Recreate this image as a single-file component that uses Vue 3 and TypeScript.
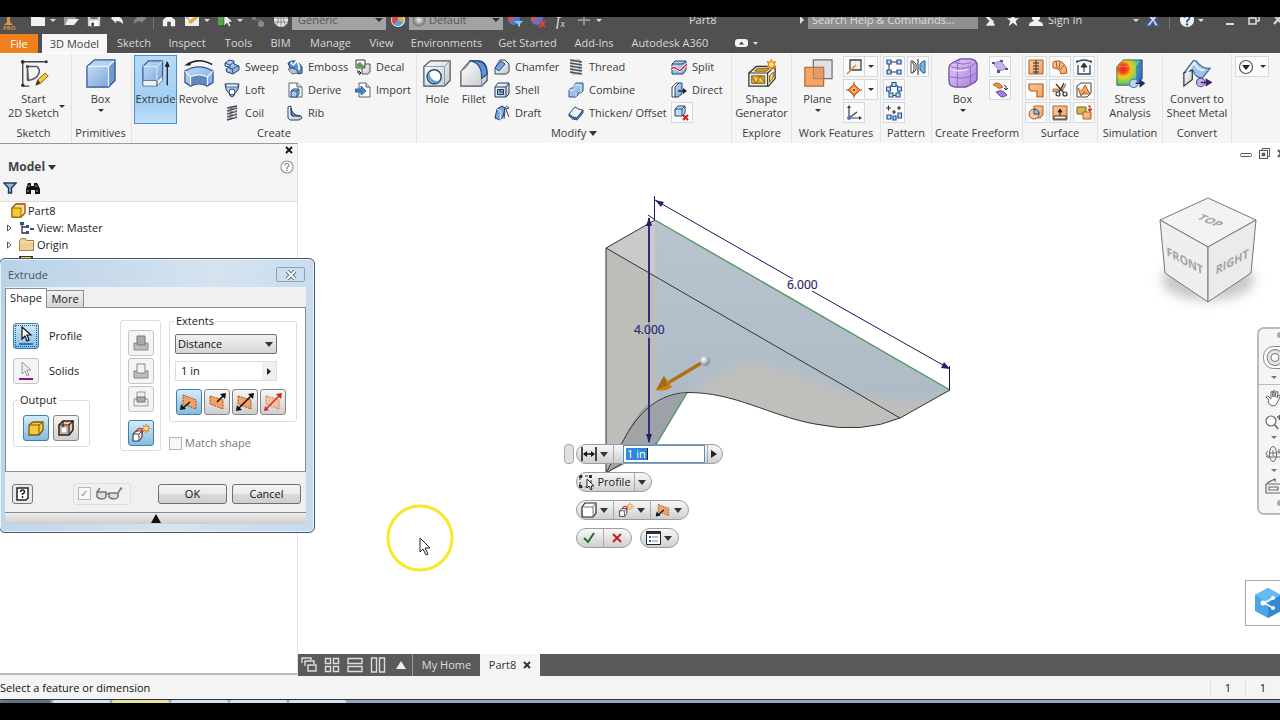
<script setup lang="ts">
import { h, ref } from 'vue'

interface IconProps { n: string; s?: number }
const Ico = (p: IconProps) =>
  h('svg', { width: p.s ?? 16, height: p.s ?? 16, 'aria-hidden': 'true' }, [h('use', { href: '#' + p.n })])
Ico.props = ['n', 's']

const tabs = ['Sketch', 'Inspect', 'Tools', 'BIM', 'Manage', 'View', 'Environments', 'Get Started', 'Add-Ins', 'Autodesk A360']

const createTools = [
  ['sweep', 'Sweep'], ['emboss', 'Emboss'], ['decal', 'Decal'],
  ['loft', 'Loft'], ['derive', 'Derive'], ['import', 'Import'],
  ['coil', 'Coil'], ['rib', 'Rib'],
]
const modifyTools = [
  ['chamfer', 'Chamfer'], ['thread', 'Thread'], ['split', 'Split'],
  ['shell', 'Shell'], ['combine', 'Combine'], ['direct', 'Direct'],
  ['draft', 'Draft'], ['thicken', 'Thicken/ Offset'],
]
const surfaceTools = ['stitch', 'patch', 'ruled', 'sculpt', 'trim', 'repair', 'boundary', 'extend', 'replace']
const operations = ['join', 'cut', 'intersect']
const directions = ['dir1', 'dir2', 'dir3', 'dir4']

const distance = ref('1 in')
const extents = ref('Distance')
</script>

<template>
  <svg class="sprite" aria-hidden="true">
    <defs>
      <linearGradient id="gBlue" x1="0" y1="0" x2="1" y2="1"><stop offset="0" stop-color="#c3dcf5" /><stop offset="1" stop-color="#7ba6dc" /></linearGradient>
      <linearGradient id="gGrey" x1="0" y1="0" x2="1" y2="1"><stop offset="0" stop-color="#fff" /><stop offset="1" stop-color="#c3c8ce" /></linearGradient>
      <linearGradient id="gOrange" x1="0" y1="0" x2="1" y2="1"><stop offset="0" stop-color="#ffc896" /><stop offset="1" stop-color="#f5a263" /></linearGradient>
      <linearGradient id="gPurple" x1="0" y1="0" x2="1" y2="1"><stop offset="0" stop-color="#e2cff9" /><stop offset="1" stop-color="#a680d8" /></linearGradient>
      <radialGradient id="gStress" cx=".25" cy=".35" r=".9"><stop offset="0" stop-color="#e8281c" /><stop offset=".2" stop-color="#f0501c" /><stop offset=".35" stop-color="#f7c51c" /><stop offset=".55" stop-color="#8ed63a" /><stop offset=".75" stop-color="#2fb7c9" /><stop offset="1" stop-color="#2358c8" /></radialGradient>
    </defs>
    <!-- large ribbon icons -->
    <symbol id="sketch" viewBox="0 0 32 32"><path d="M4 4v26M2 4h28M4 30h7" stroke="#444" fill="none" stroke-width="1.4" /><path d="M9 9h10c5 4 3 13-9 15zM9 9v15" fill="none" stroke="#555b66" stroke-width="1.6" /><circle cx="4" cy="4" r="2" fill="#333" /><circle cx="29" cy="4" r="1.6" fill="#333" /><circle cx="4" cy="29" r="1.8" fill="#333" /><circle cx="9" cy="9" r="1.6" fill="#444" /><path d="M18 29l2-6 8-7 3 3-8 8z" fill="#f6c945" stroke="#7a5a10" /><path d="M18 29l2-6 3 4z" fill="#4b3a1a" /></symbol>
    <symbol id="box" viewBox="0 0 32 32"><path d="M1 9l8-7h22l-7 7z" fill="#b5d2f2" /><path d="M1 9h23v22H1z" fill="url(#gBlue)" /><path d="M24 9l7-7v22l-7 7z" fill="#6e98cf" /><path d="M1 9l8-7h22v22l-7 7H1z" fill="none" stroke="#2f5486" stroke-width="1.3" /><path d="M2 9h22v21M24 9l6-6" fill="none" stroke="#eaf3fc" stroke-width="1.3" /></symbol>
    <symbol id="extrude" viewBox="0 0 32 32"><path d="M2 9l6-6h15v19l-6 6H2z" fill="url(#gBlue)" stroke="#375a8b" stroke-width="1.3" /><path d="M2 24h15v6H2zM17 24l6-5v5l-6 6z" fill="#edf1f6" stroke="#66738a" /><path d="M17 9v15M17 9l6-6M2 9h15" stroke="#e5f0fb" fill="none" /><path d="M28 29V6" stroke="#222" stroke-width="1.4" /><path d="M26 9l2-5 2 5z" fill="#222" stroke="#222" /></symbol>
    <symbol id="revolve" viewBox="0 0 32 32"><path d="M1 14q15-9 30 0v12l-6 4q-9-5-18 0l-6-4z" fill="url(#gBlue)" stroke="#2e5589" stroke-width="1.3" /><path d="M7 20q9-4 18 0v9q-9-4-18 0z" fill="#6087bd" /><path d="M1 14l6 6v9M31 14l-6 6v9M7 20q9-4 18 0" fill="none" stroke="#f0f6fd" stroke-width="1.2" /><path d="M3 7Q16-1 30 7" fill="none" stroke="#222" stroke-width="1.700" /><path d="M0 8l7-4v4z" fill="#222" /></symbol>
    <symbol id="hole" viewBox="0 0 32 32"><path d="M2 9l7-6h21v21l-6 6H2z" fill="url(#gGrey)" stroke="#4c535c" stroke-width="1.3" /><path d="M2 9h22v21M24 9l6-6" fill="none" stroke="#8d949c" /><circle cx="13" cy="20" r="7.500" fill="#fff" stroke="#244a7c" stroke-width="1.6" /><path d="M8 15a7 7 0 1 0 11 9c-6 2-11-2-11-9z" fill="#6d9ad4" /></symbol>
    <symbol id="fillet" viewBox="0 0 32 32"><path d="M2 30V14L12 3h10q8 1 8 14v7l-6 6z" fill="url(#gGrey)" stroke="#4c535c" stroke-width="1.3" /><path d="M11 3q14 2 13 19l6-5Q30 3 18 3z" fill="#5e93d8" stroke="#234a80" stroke-width="1.2" /><path d="M2 14q6-2 10-10M24 22v8" fill="none" stroke="#8d949c" /></symbol>
    <symbol id="shapegen" viewBox="0 0 32 32"><path d="M2 16l8-7h20v13l-7 8H2z" fill="#f4f1e6" stroke="#333" stroke-width="1.4" /><path d="M2 16h20v14M22 16l8-7" fill="none" stroke="#333" stroke-width="1.2" /><path d="M5 19h14v8H5zM11 11h13l-3 3H8z" fill="#d9a92a" stroke="#7d5b0c" /><path d="M5 19l5 8 4-8 5 8M24 19v7l4-5v-6z" fill="#f5d36c" stroke="#7d5b0c" /><path d="M26 0l1.500 4 4-1-2 4 2 4-4-1-1.500 4-1.500-4-4 1 2-4-2-4 4 1z" fill="#f28a1a" /><circle cx="26" cy="7" r="2.500" fill="#ffe68a" /></symbol>
    <symbol id="plane" viewBox="0 0 32 32"><path d="M11 2h20v20H11z" fill="#dde2e6" stroke="#6b7178" stroke-width="1.3" /><path d="M2 10h20v20H2z" fill="#f7a468" stroke="#b96a32" stroke-width="1.3" /><path d="M11 10h11v12H11z" fill="#e59a68" stroke="#ad7a58" /></symbol>
    <symbol id="freebox" viewBox="0 0 32 32"><path d="M1 11q0-4 4-6t8-4h11q7 1 7 7v13q0 4-4 6t-8 4H8q-7 0-7-7z" fill="url(#gPurple)" stroke="#6e48a3" stroke-width="1.3" /><path d="M3 9q11 4 21 0l6-4M12 2q-3 4-2 8v20M24 9v20M2 20q12 3 22 0l6-4M7 5q9 3 18 0" fill="none" stroke="#8f66c4" stroke-width="1" /><path d="M5 13q9 2 16-1" fill="none" stroke="#f1e7fc" stroke-width="1.4" /></symbol>
    <symbol id="stress" viewBox="0 0 32 32"><path d="M2 9l7-7h20v20l-7 7H2z" fill="url(#gStress)" stroke="#555" /><path d="M22 9l7-7v20l-7 7z" fill="#2b50bd" opacity=".5" /><path d="M2 9h20v20" fill="none" stroke="#dce" opacity=".4" /><circle cx="20" cy="27" r="4.500" fill="#bcd6ee" stroke="#5586b8" stroke-width="1.2" /><path d="M22 27h6M27 24l4 3-4 3z" stroke="#1b2a63" stroke-width="1.600" fill="#1b2a63" /></symbol>
    <symbol id="sheet" viewBox="0 0 32 32"><path d="M2 16L12 3q2-1 4 1 6 8 14 7l-8 10q-7 1-10-7z" fill="#9dc1ea" stroke="#3e648f" stroke-width="1.3" /><path d="M2 16l9-3v10l-9 7z" fill="url(#gGrey)" stroke="#333" stroke-width="1.3" /><path d="M5 16l8-11q4 9 11 8" fill="none" stroke="#e6f1fc" stroke-width="2" /><circle cx="20" cy="26" r="4.500" fill="#c9b3e6" stroke="#6c4f9c" stroke-width="1.3" /><path d="M20 26h7M26 23l5 3-5 3z" stroke="#3b2466" stroke-width="1.600" fill="#3b2466" /></symbol>
    <!-- small ribbon icons -->
    <symbol id="sweep" viewBox="0 0 16 16"><path d="M1 4l4-3 5 1v3l5 2v4l-6 4-6-2-1-3 3-2-4-1z" fill="url(#gBlue)" stroke="#26466f" /><path d="M1 4l5 2 4-3M6 6v3M5 9l3 1 6-3M8 10l1 4" fill="none" stroke="#26466f" stroke-width=".9" /></symbol>
    <symbol id="loft" viewBox="0 0 16 16"><path d="M1 2h14l-1 5q-1 3-3 4-1 4-3 4t-3-4Q3 10 2 7z" fill="url(#gBlue)" stroke="#26466f" /><path d="M2 2h12v3H2z" fill="#e5effa" stroke="#26466f" stroke-width=".7" /><circle cx="8" cy="10" r="3" fill="#fff" stroke="#26466f" /></symbol>
    <symbol id="coil" viewBox="0 0 16 16"><path d="M3 3l10-2M3 6l10-3M3 9l10-3M3 12l10-3M3 15l10-3" stroke="#3d434b" stroke-width="1.700" /><path d="M3 3l10 1M3 6l10 1M3 9l10 1M3 12l10 1" stroke="#8a929d" /></symbol>
    <symbol id="emboss" viewBox="0 0 16 16"><path d="M1 4q8-6 14 4v6l-4 1Q9 7 3 9z" fill="#5a92d2" stroke="#1d3b66" /><path d="M4 3q2 5 4 1t4 3v4" fill="none" stroke="#fff" stroke-width="1.600" /><path d="M1 10l4 5 6-1q-2-6-10-4z" fill="#b8c7d8" stroke="#445" stroke-width=".7" /></symbol>
    <symbol id="derive" viewBox="0 0 16 16"><path d="M2 1h8l5 4v10H2z" fill="#fff" stroke="#5c636c" /><path d="M10 1v4h5" fill="#d8dee5" stroke="#5c636c" /><path d="M4 9l2-2h6v5l-2 3H4z" fill="#a9caf0" stroke="#244d82" /><path d="M4 9h6v6M10 9l2-2" fill="none" stroke="#244d82" /></symbol>
    <symbol id="rib" viewBox="0 0 16 16"><path d="M1 2l3-1v9l10 1 1 2-3 2H3l-2-2z" fill="url(#gGrey)" stroke="#26466f" /><path d="M4 3q1 7 9 8H5z" fill="#699bd6" stroke="#1d3b66" /></symbol>
    <symbol id="decal" viewBox="0 0 16 16"><path d="M1 1h9v8H1z" fill="#fff" stroke="#333" /><path d="M2 8V5l3-2 4 4v1z" fill="#5b9b43" /><path d="M7 9h3V5h5v8l-2 2H7z" fill="url(#gGrey)" stroke="#555" /><path d="M3 11v3h3M4 12l2 2-2 2" fill="none" stroke="#222" /></symbol>
    <symbol id="import" viewBox="0 0 16 16"><path d="M4 1h7l4 4v10H4z" fill="#fff" stroke="#5c636c" /><path d="M11 1v4h4" fill="#d8dee5" stroke="#5c636c" /><path d="M0 7h6V4l5 5-5 4v-3H0z" fill="#4189d2" stroke="#1c4f8e" stroke-width=".8" /></symbol>
    <symbol id="chamfer" viewBox="0 0 16 16"><path d="M1 9l5-8h5l4 4v8l-3 2H1z" fill="url(#gGrey)" stroke="#3c4652" /><path d="M1 9l6-7 4 3-6 7z" fill="#75a7e0" stroke="#244d82" /></symbol>
    <symbol id="shell" viewBox="0 0 16 16"><path d="M1 5l3-4h11v11l-3 3H1z" fill="url(#gGrey)" stroke="#1d3b66" /><path d="M1 5h11v10M12 5l3-4" fill="none" stroke="#1d3b66" /><path d="M3.500 7.500h6v5h-6z" fill="#8fb8e8" stroke="#1d3b66" /><path d="M6 7.500v2.500h3.500" fill="none" stroke="#1d3b66" /></symbol>
    <symbol id="draft" viewBox="0 0 16 16"><path d="M1 13l2-9 5-3 3 2-2 9-3 3z" fill="#75a7e0" stroke="#1d3b66" /><path d="M3 4l4 2-1 9" fill="none" stroke="#e5effa" /><path d="M11 2l4 10M11 6l-1 8M12 1l3 2-3 1" stroke="#444" fill="none" /></symbol>
    <symbol id="thread" viewBox="0 0 16 16"><path d="M4 1h8v14H4z" fill="#e4e8ec" stroke="#777" stroke-width=".6" /><path d="M2 1l12 2M2 4l12 2M2 7l12 2M2 10l12 2M2 13l12 2" stroke="#4b525b" stroke-width="1.300" /></symbol>
    <symbol id="combine" viewBox="0 0 16 16"><path d="M6 3l2-2h7v8l-2 2h-3v2l-2 2H1V8l2-2h3z" fill="url(#gBlue)" stroke="#2f5486" /><path d="M6 3v5H1M6 3h7v8M8 11v4" fill="none" stroke="#e5effa" stroke-width=".8" /></symbol>
    <symbol id="thicken" viewBox="0 0 16 16"><path d="M1 9l6-7q4 3 8 3l-6 8q-5 0-8-4z" fill="#eef3f8" stroke="#3c4652" /><path d="M1 9q3 4 8 4l6-8v3l-6 7q-5 0-8-4z" fill="#4c8ad2" stroke="#1d3b66" stroke-width=".8" /></symbol>
    <symbol id="split" viewBox="0 0 16 16"><path d="M1 5l3-3h11v9l-3 4H1z" fill="url(#gBlue)" stroke="#26466f" /><path d="M1 5h11l3-3" fill="none" stroke="#26466f" /><path d="M0 10q3-3 6 0t6-1l4-4" fill="none" stroke="#fff" stroke-width="3" /><path d="M0 10q3-3 6 0t6-1l4-4" fill="none" stroke="#c41f2b" stroke-width="1.300" /></symbol>
    <symbol id="direct" viewBox="0 0 16 16"><path d="M1 5l4-4h3v11l-3 3H1z" fill="#fff" stroke="#3c4652" /><path d="M4 5l4-4h3v11l-4 3H4z" fill="url(#gBlue)" stroke="#26466f" /><path d="M7 9h6" stroke="#222" stroke-width="1.400" /><path d="M12 6l4 3-4 3z" fill="#222" /></symbol>
    <symbol id="delface" viewBox="0 0 16 16"><path d="M1 4l3-3h7v7l-3 3H1z" fill="#c4dcf5" stroke="#26466f" /><path d="M1 4h7v7M8 4l3-3" fill="none" stroke="#26466f" /><path d="M9 10l5 5M14 10l-5 5" stroke="#cc2222" stroke-width="2" /></symbol>
    <symbol id="axis" viewBox="0 0 16 16"><path d="M4 1h11v10H4z" fill="#f0efec" stroke="#444" stroke-width="1.300" /><path d="M1 15l9-9" stroke="#e2893c" stroke-width="1.700" /></symbol>
    <symbol id="point" viewBox="0 0 16 16"><path d="M8 0v16M0 8h16" stroke="#8e4c1d" /><path d="M8 2l6 6-6 6-6-6z" fill="#ef8331" stroke="#b65613" /><path d="M8 5l3 3-3 3-3-3z" fill="#ffe1c4" /><circle cx="8" cy="8" r="1.300" fill="#7a3a10" /></symbol>
    <symbol id="ucs" viewBox="0 0 16 16"><path d="M3 13V2M3 13h12M3 13l8-6" stroke="#343a42" stroke-width="1.200" /><path d="M1 3l2-3 2 3zM13 11l3 2-3 2z" fill="#343a42" /><circle cx="3" cy="13" r="2" fill="#3f81cc" /></symbol>
    <symbol id="rect" viewBox="0 0 16 16"><path d="M3 3h10M3 3v10M3 13h10" fill="none" stroke="#333" /><path d="M1 1h4v4H1zM11 1h4v4h-4zM1 11h4v4H1zM11 11h4v4h-4z" fill="#c4dcf5" stroke="#1d4f94" stroke-width="1.200" /></symbol>
    <symbol id="mirror" viewBox="0 0 16 16"><path d="M1 2h2v3h1v5l-1 4H1zM3 2l3 3v6l-3 3" fill="#fff" stroke="#444" /><path d="M15 2h-2l-3 3v6l3 3h2z" fill="#76b4e6" stroke="#1e5f9e" /><path d="M8 0v16" stroke="#222" /></symbol>
    <symbol id="circ" viewBox="0 0 16 16"><circle cx="8" cy="8" r="5.500" fill="none" stroke="#333" /><path d="M6 0.500h4v4H6zM11.500 5h4v4h-4zM.5 5h4v4h-4zM3 11h4v4H3zM10 11h4v4h-4z" fill="#c4dcf5" stroke="#1d4f94" stroke-width="1.100" /></symbol>
    <symbol id="skpat" viewBox="0 0 16 16"><path d="M0 3h5M2.500 .5v5M6 7h4M8 5v4M11 3h4M13 1v4" stroke="#333" stroke-width="1.200" /><path d="M1 10h4v4H1zM7 11h3v4H7zM12 8h3.500v5h-3.500z" fill="#c4dcf5" stroke="#1d4f94" stroke-width="1.200" /></symbol>
    <symbol id="ffplane" viewBox="0 0 16 16"><path d="M1 4l8-2 6 8-8 2z" fill="#c9b2ea" stroke="#8a6cb8" stroke-dasharray="2 1" /><path d="M0 3h3v2H0zM8 1h3v2H8zM13 9h3v2h-3zM5 11h3v3H5z" fill="#4c5c8c" /></symbol>
    <symbol id="ffconv" viewBox="0 0 16 16"><path d="M1 3q4-4 8 0l2 2q-5 3-7-1-2-1-3-1z" fill="#f0914a" stroke="#b05a20" /><path d="M4 10q5-3 8 0l3 3q-5 4-8 0z" fill="#a17fd4" stroke="#6d4d9d" /><path d="M12 3q3 1 2 4M12 6l2 2 2-2" fill="none" stroke="#333" /></symbol>
    <symbol id="stitch" viewBox="0 0 16 16"><path d="M1 1h14v14H1z" fill="url(#gOrange)" stroke="#a5602c" /><path d="M8 1v14M5 4h6M5 7h6M5 10h6M5 13h6" stroke="#333" /></symbol>
    <symbol id="patch" viewBox="0 0 16 16"><path d="M1 3q8-4 13 5l1 6-6 1Q8 9 1 9z" fill="url(#gOrange)" stroke="#a5602c" /><path d="M4 2l1 7M8 3L7 10M12 6l-4 5" stroke="#a5602c" fill="none" /></symbol>
    <symbol id="ruled" viewBox="0 0 16 16"><path d="M1 3q7-4 14 0M2 6v9h12V6M1 1v3M15 1v3" fill="none" stroke="#26466f" stroke-width="1.300" /><path d="M8 13V5M5 8l3-4 3 4z" fill="#333" stroke="#333" /></symbol>
    <symbol id="sculpt" viewBox="0 0 16 16"><path d="M1 2h14v13H9V9H3L1 7z" fill="url(#gOrange)" stroke="#a5602c" stroke-width="1.200" /></symbol>
    <symbol id="trim" viewBox="0 0 16 16"><path d="M1 7h7l6-5-3 6-10 2z" fill="#f5a263" stroke="#a5602c" stroke-width=".8" /><path d="M4 2l8 9M12 1L7 10" stroke="#333" stroke-width="1.200" /><circle cx="6" cy="12" r="2" fill="none" stroke="#333" stroke-width="1.200" /><circle cx="13" cy="12" r="2" fill="none" stroke="#333" stroke-width="1.200" /></symbol>
    <symbol id="repair" viewBox="0 0 16 16"><path d="M1 4l4-3h10v10l-4 4H1z" fill="#fff" stroke="#444" /><path d="M9 3l5 9H4z" fill="#f5a263" stroke="#a5602c" /><path d="M2 6l3 8 4-5" fill="#f5a263" stroke="#a5602c" /></symbol>
    <symbol id="boundary" viewBox="0 0 16 16"><path d="M6 1h9v9l-3 3H6z" fill="url(#gOrange)" stroke="#a5602c" /><circle cx="6" cy="9" r="5" fill="#f7c9a2" stroke="#a5602c" /><path d="M6 4a5 5 0 0 1 5 5H6z" fill="#9cc3ee" stroke="#26466f" /></symbol>
    <symbol id="extend" viewBox="0 0 16 16"><path d="M1 1h14v14H1z" fill="url(#gOrange)" stroke="#a5602c" /><path d="M2 11h12v3H2z" fill="#fff" stroke="#333" /><path d="M8 11V5M6 7l2-3 2 3z" fill="#222" stroke="#222" /></symbol>
    <symbol id="replace" viewBox="0 0 16 16"><path d="M1 2h9v7H1z" fill="#d6b84a" stroke="#77621c" /><path d="M7 7h8v7H7z" fill="url(#gOrange)" stroke="#a5602c" /><path d="M12 1h2v4M12 4l2 2 2-2" fill="none" stroke="#c22" stroke-width="1.200" /></symbol>
    <!-- title bar icons -->
    <symbol id="t-new" viewBox="0 0 16 16"><path d="M1 2h10l4 4v8H1z" fill="#f2f2f2" /><path d="M11 2v4h4" fill="#bbb" /></symbol>
    <symbol id="t-open" viewBox="0 0 16 16"><path d="M1 3h5l1 2h6v3H5l-4 6z" fill="#999" /><path d="M5 7h11l-5 6H2z" fill="#eee" /></symbol>
    <symbol id="t-save" viewBox="0 0 16 16"><path d="M1 1h14v14H1z" fill="#cfd3d6" /><path d="M4 1h8v6H4z" fill="#777" /><path d="M3 9h10v6H3z" fill="#fff" /><path d="M5 11h3v4H5z" fill="#444" /></symbol>
    <symbol id="t-undo" viewBox="0 0 16 16"><path d="M1 6l6-5v3q8 0 8 9-2-4-8-4v3z" fill="#eee" /></symbol>
    <symbol id="t-redo" viewBox="0 0 16 16"><path d="M15 6L9 1v3q-8 0-8 9 2-4 8-4v3z" fill="#888" /></symbol>
    <symbol id="t-home" viewBox="0 0 16 16"><path d="M1 8l7-6 7 6v7h-5v-5H6v5H1z" fill="#f2f2f2" /></symbol>
    <symbol id="t-mail" viewBox="0 0 16 16"><path d="M1 3h14v11H1z" fill="#eee" /><path d="M1 4l7 6 7-6" fill="none" stroke="#777" /><path d="M4 10l8-7 2 2-7 7z" fill="#e7ac2b" /></symbol>
    <symbol id="t-select" viewBox="0 0 16 16"><path d="M1 2h6v11H1z" fill="#58a64b" /><path d="M7 2v12l3-3 2 4 2-1-2-4h4z" fill="#f3f3f3" stroke="#333" stroke-width=".6" /></symbol>
    <symbol id="t-tree" viewBox="0 0 16 16"><path d="M2 4h4v4H2z" fill="#777" /><path d="M5 8h6v4" fill="none" stroke="#777" /><circle cx="11" cy="12" r="3" fill="#8e8e8e" /></symbol>
    <symbol id="t-globe" viewBox="0 0 16 16"><circle cx="8" cy="8" r="7" fill="#e8e8e8" /><path d="M2 6h12M2 10h12M8 1v14M4 3q3 5 0 10M12 3q-3 5 0 10" stroke="#777" stroke-width=".8" fill="none" /></symbol>
    <symbol id="t-wheel" viewBox="0 0 16 16"><circle cx="8" cy="8" r="7" fill="#eee" /><path d="M8 8V2a6 6 0 0 1 5.500 8z" fill="#e2a73a" /><path d="M8 8L13.500 10a6 6 0 0 1-9 3z" fill="#49a6dd" /><path d="M8 8l-3.500 5A6 6 0 0 1 8 2z" fill="#db4a55" /></symbol>
    <symbol id="t-wheelf" viewBox="0 0 16 16"><circle cx="7" cy="7" r="6" fill="#5577cf" /><path d="M7 7l-5 3a6 6 0 0 1 5-9z" fill="#e04e50" /><path d="M7 9h9l-3 3v3l-2-1v-2z" fill="#7ed0f2" /></symbol>
    <symbol id="t-wheelx" viewBox="0 0 16 16"><circle cx="7" cy="7" r="6" fill="#5577cf" /><path d="M7 7l-5 3a6 6 0 0 1 5-9z" fill="#e04e50" /><path d="M9 9l6 6M15 9l-6 6" stroke="#e8413a" stroke-width="2" /></symbol>
    <symbol id="t-plus" viewBox="0 0 16 16"><path d="M8 2v12M1 8h14" stroke="#999" stroke-width="2" /></symbol>
    <symbol id="t-dish" viewBox="0 0 16 16"><path d="M3 1q1 8 9 9zM8 9l-4 5h9l-2-4zM8 5l4-4" fill="#eee" stroke="#eee" /></symbol>
    <symbol id="t-star" viewBox="0 0 16 16"><path d="M8 1l2 5h5l-4 3 2 6-5-4-5 4 2-6-4-3h5z" fill="#f2f2f2" /></symbol>
    <symbol id="t-user" viewBox="0 0 16 16"><path d="M4 1h8v6l-2 2q5 1 5 4v1H1v-1q0-3 5-4L4 7z" fill="#f2f2f2" /></symbol>
    <symbol id="t-x" viewBox="0 0 16 16"><path d="M1 1h4l3 4 3-4h4l-5 7 4 6h-4l-2-4-3 4H1l5-6z" fill="#dfe5ef" stroke="#3f5fa8" stroke-width="1.500" /></symbol>
    <symbol id="t-help" viewBox="0 0 16 16"><circle cx="8" cy="8" r="7" fill="#f2f2f2" /><path d="M5.500 6q0-2.500 2.500-2.500T10.500 6Q10.500 7 8 9v1.500" fill="none" stroke="#2c5b9c" stroke-width="1.800" /><circle cx="8" cy="12.500" r="1.200" fill="#2c5b9c" /></symbol>
    <!-- dialog icons -->
    <symbol id="pick" viewBox="0 0 20 20"><path d="M6 1v12l3-3 2 5 2-1-2-5h4z" fill="#fff" stroke="#111" stroke-width="1.200" /><path d="M3 18h14" stroke="#2f74c8" stroke-width="2" /></symbol>
    <symbol id="picksolid" viewBox="0 0 20 20"><path d="M6 1v12l3-3 2 5 2-1-2-5h4z" fill="#eee" stroke="#999" /><path d="M3 18h14" stroke="#8c1585" stroke-width="2" /></symbol>
    <symbol id="solid" viewBox="0 0 20 20"><path d="M3 7l4-3h10v8l-4 5H3z" fill="#f5c93d" stroke="#7c5a11" stroke-width="1.300" /><path d="M3 7h10v10M13 7l4-3" fill="none" stroke="#7c5a11" /></symbol>
    <symbol id="surf" viewBox="0 0 20 20"><path d="M3 7l4-4h10v9l-4 5H3z" fill="#f5c4a4" stroke="#222" stroke-width="1.500" /><path d="M5 9h6v6H5z" fill="#fff" stroke="#777" stroke-width=".8" /><path d="M3 7h10v10M13 7l4-4M7 3v6" fill="none" stroke="#222" stroke-width="1.200" /></symbol>
    <symbol id="join" viewBox="0 0 20 20"><path d="M3 10h14v7H3z" fill="#bdbdbd" stroke="#888" /><path d="M6 3h8v9H6z" fill="#a9a9a9" stroke="#777" /></symbol>
    <symbol id="cut" viewBox="0 0 20 20"><path d="M3 10h14v7H3z" fill="#bdbdbd" stroke="#888" /><path d="M6 3h8v9H6z" fill="#f3f3f3" stroke="#888" /></symbol>
    <symbol id="intersect" viewBox="0 0 20 20"><path d="M3 10h14v7H3zM6 3h8v8H6z" fill="#ededed" stroke="#999" /><path d="M6 8h8v5H6z" fill="#aaa" stroke="#777" /></symbol>
    <symbol id="newsolid" viewBox="0 0 20 20"><path d="M2 11l3-3h6v6l-3 4H2z" fill="#fff" stroke="#444" stroke-width="1.200" /><path d="M2 11h6v7M8 11l3-3" fill="none" stroke="#444" /><path d="M5 9q2-5 6-3v5" fill="none" stroke="#d02030" stroke-width="1.300" /><path d="M15 1v9M10.500 5.500h9M12 2.500l6 6M18 2.500l-6 6" stroke="#dd7a15" stroke-width="1.200" /><circle cx="15" cy="5.500" r="2" fill="#ffe08a" /></symbol>
    <symbol id="dir1" viewBox="0 0 20 20"><path d="M4 3l13 5v9L4 12z" fill="#f5a263" stroke="#985224" stroke-dasharray="2 1" /><path d="M11 10l-7 6" stroke="#111" stroke-width="1.600" /><path d="M1 18l1-6 5 5z" fill="#111" /></symbol>
    <symbol id="dir2" viewBox="0 0 20 20"><path d="M3 4l13 4v9L3 12z" fill="#f5a263" stroke="#985224" stroke-dasharray="2 1" /><path d="M10 10l6-6" stroke="#111" stroke-width="1.600" /><path d="M19 1l-1 6-5-5z" fill="#111" /></symbol>
    <symbol id="dir3" viewBox="0 0 20 20"><path d="M3 4l13 4v9L3 12z" fill="#f5a263" stroke="#985224" stroke-dasharray="2 1" /><path d="M4 16L16 4" stroke="#111" stroke-width="1.600" /><path d="M19 1l-1 6-5-5zM1 19l1-6 5 5z" fill="#111" /></symbol>
    <symbol id="dir4" viewBox="0 0 20 20"><path d="M3 4l13 4v9L3 12z" fill="#f9c3a0" stroke="#c47a54" stroke-dasharray="2 1" /><path d="M4 16L16 4" stroke="#d22" stroke-width="1.400" /><path d="M19 1l-1 6-5-5zM1 19l1-5 4 4z" fill="#d22" /></symbol>
  </svg>

  <div class="app">
    <div class="letterbox top"></div>

    <header class="titlebar">
      <div class="title-row">
        <div class="quick">
          <span class="logo"><svg width="10" height="8"><path d="M4 0h3v5l3 3H1l3-3z" fill="#d79443" /></svg>PRO</span>
          <button class="cell" aria-label="New"><Ico n="t-new" /></button><i class="tri"></i>
          <button class="cell" aria-label="Open"><Ico n="t-open" /></button>
          <button class="cell" aria-label="Save"><Ico n="t-save" :s="14" /></button>
          <button class="cell" aria-label="Undo"><Ico n="t-undo" :s="14" /></button>
          <button class="cell" aria-label="Redo"><Ico n="t-redo" :s="14" /></button>
          <i class="vsep"></i>
          <button class="cell" aria-label="Home"><Ico n="t-home" :s="14" /></button>
          <button class="cell" aria-label="Projects"><Ico n="t-mail" /></button><i class="tri"></i>
          <button class="cell" aria-label="Select"><Ico n="t-select" /></button><i class="tri"></i>
          <button class="cell" aria-label="Update"><Ico n="t-tree" /></button>
          <button class="cell" aria-label="Material"><Ico n="t-globe" /></button>
          <label class="combo"><select aria-label="Material"><option>Generic</option></select><i class="tri dark"></i></label>
          <button class="cell" aria-label="Appearance wheel"><Ico n="t-wheel" /></button>
          <label class="combo ball"><select aria-label="Appearance"><option>Default</option></select><i class="tri dark"></i></label>
          <button class="cell" aria-label="Adjust"><Ico n="t-wheelf" /></button>
          <button class="cell" aria-label="Clear"><Ico n="t-wheelx" /></button>
          <button class="cell fx" aria-label="Parameters">f<small>x</small></button>
          <button class="cell" aria-label="Add"><Ico n="t-plus" :s="14" /></button><i class="tri"></i>
        </div>
        <span class="doc-title">Part8</span>
        <div class="title-right">
          <i class="rtri"></i>
          <input class="search" type="text" placeholder="Search Help &amp; Commands..." aria-label="Search" />
          <button class="cell" aria-label="Communication"><Ico n="t-dish" :s="14" /></button>
          <button class="cell" aria-label="Favorites"><Ico n="t-star" :s="14" /></button>
          <button class="cell" aria-label="User"><Ico n="t-user" /></button>
          <button class="signin">Sign In</button><i class="tri"></i>
          <button class="cell xch" aria-label="Exchange"><Ico n="t-x" /></button>
          <i class="vsep"></i>
          <button class="cell wide" aria-label="Help"><Ico n="t-help" /></button><i class="tri"></i>
          <span class="win-btns">
            <button aria-label="Minimize"><svg width="12" height="12"><path d="M2 10h8" stroke="#ddd" stroke-width="2" /></svg></button>
            <button aria-label="Restore"><svg width="12" height="12"><path d="M4 4V1h7v6H8M1 4h7v6H1z" fill="none" stroke="#ddd" stroke-width="1.500" /></svg></button>
            <button aria-label="Close"><svg width="12" height="12"><path d="M2 1l8 9M10 1l-8 9" stroke="#ddd" stroke-width="2" /></svg></button>
          </span>
        </div>
      </div>
    </header>

    <nav class="tabs">
      <button class="file">File</button>
      <button class="active">3D Model</button>
      <button v-for="t in tabs" :key="t">{{ t }}</button>
      <button class="pill-tab" aria-label="Collapse ribbon"><svg width="24" height="8"><rect width="13" height="8" rx="3" fill="#f1f1f1" /><path d="M4 5.500l2.500-3 2.500 3z" fill="#444" /><path d="M18 3h5l-2.500 3z" fill="#ddd" /></svg></button>
    </nav>

    <section class="ribbon">
      <div class="panel p-sketch">
        <div class="tools"><button class="big"><Ico n="sketch" :s="30" /><span>Start<br>2D Sketch</span><i class="tri dark side"></i></button></div>
        <h2>Sketch</h2>
      </div>
      <div class="panel p-prim">
        <div class="tools"><button class="big"><Ico n="box" :s="30" /><span>Box</span><i class="tri dark"></i></button></div>
        <h2>Primitives</h2>
      </div>
      <div class="panel p-create">
        <div class="tools">
          <button class="big on"><Ico n="extrude" :s="30" /><span>Extrude</span></button>
          <button class="big"><Ico n="revolve" :s="30" /><span>Revolve</span></button>
          <div class="smalls c-create">
            <button v-for="[n, t] in createTools" :key="n" class="small"><Ico :n="n" /><span>{{ t }}</span></button>
          </div>
        </div>
        <h2>Create</h2>
      </div>
      <div class="panel p-modify">
        <div class="tools">
          <button class="big narrow"><Ico n="hole" :s="30" /><span>Hole</span></button>
          <button class="big narrow"><Ico n="fillet" :s="30" /><span>Fillet</span></button>
          <div class="smalls c-modify">
            <button v-for="[n, t] in modifyTools" :key="n" class="small"><Ico :n="n" /><span>{{ t }}</span></button>
            <button class="sq" aria-label="Delete Face"><Ico n="delface" /></button>
          </div>
        </div>
        <h2>Modify <i class="tri dark lg"></i></h2>
      </div>
      <div class="panel p-explore">
        <div class="tools"><button class="big"><Ico n="shapegen" :s="30" /><span>Shape<br>Generator</span></button></div>
        <h2>Explore</h2>
      </div>
      <div class="panel p-work">
        <div class="tools">
          <button class="big"><Ico n="plane" :s="30" /><span>Plane</span><i class="tri dark"></i></button>
          <div class="sqs two">
            <button class="sq" aria-label="Axis"><Ico n="axis" /></button><button class="sq drop" aria-label="Axis options"><i class="tri dark"></i></button>
            <button class="sq" aria-label="Point"><Ico n="point" /></button><button class="sq drop" aria-label="Point options"><i class="tri dark"></i></button>
            <button class="sq" aria-label="UCS"><Ico n="ucs" /></button>
          </div>
        </div>
        <h2>Work Features</h2>
      </div>
      <div class="panel p-pattern">
        <div class="tools"><div class="sqs pair">
          <button class="sq" aria-label="Rectangular"><Ico n="rect" /></button>
          <button class="sq" aria-label="Mirror"><Ico n="mirror" /></button>
          <button class="sq" aria-label="Circular"><Ico n="circ" /></button><i></i>
          <button class="sq" aria-label="Sketch Driven"><Ico n="skpat" /></button>
        </div></div>
        <h2>Pattern</h2>
      </div>
      <div class="panel p-free">
        <div class="tools">
          <button class="big"><Ico n="freebox" :s="30" /><span>Box</span><i class="tri dark"></i></button>
          <div class="sqs one">
            <button class="sq" aria-label="Plane"><Ico n="ffplane" /></button>
            <button class="sq" aria-label="Convert"><Ico n="ffconv" /></button>
          </div>
        </div>
        <h2>Create Freeform</h2>
      </div>
      <div class="panel p-surface">
        <div class="tools"><div class="sqs three"><button v-for="s in surfaceTools" :key="s" class="sq" :aria-label="s"><Ico :n="s" /></button></div></div>
        <h2>Surface</h2>
      </div>
      <div class="panel p-sim">
        <div class="tools"><button class="big"><Ico n="stress" :s="30" /><span>Stress<br>Analysis</span></button></div>
        <h2>Simulation</h2>
      </div>
      <div class="panel p-conv">
        <div class="tools"><button class="big"><Ico n="sheet" :s="30" /><span>Convert to<br>Sheet Metal</span></button></div>
        <h2>Convert</h2>
      </div>
      <div class="panel p-last">
        <button class="sq more" aria-label="Show panels"><svg width="16" height="16"><circle cx="8" cy="8" r="6.500" fill="#fff" stroke="#555" stroke-width="1.200" /><path d="M4 6h8l-4 5z" fill="#222" /></svg><i class="tri dark"></i></button>
      </div>
    </section>

    <main class="work">
      <aside class="browser">
        <div class="b-head">
          <button class="b-close" aria-label="Close browser"><svg width="8" height="8"><path d="M1 1l6 6M7 1L1 7" stroke="#111" stroke-width="1.800" /></svg></button>
          <div class="b-title"><strong>Model <i class="tri dark lg"></i></strong>
            <button aria-label="Browser help"><svg width="14" height="14"><circle cx="7" cy="7" r="6" fill="#fff" stroke="#999" stroke-width="1.200" /><path d="M5 5.500Q5 3.500 7 3.500t2 2Q9 6.500 7 7.500v1.500" fill="none" stroke="#888" stroke-width="1.200" /><circle cx="7" cy="10.500" r=".8" fill="#888" /></svg></button></div>
          <div class="b-tools">
            <button aria-label="Filter"><svg width="14" height="12"><path d="M1 1h12L8.500 6v5h-3V6z" fill="#8fb7df" stroke="#1e3c63" stroke-width="1.400" /></svg></button>
            <button aria-label="Find"><svg width="16" height="12"><path d="M3 1h3v3h3V1h3l3 6v5h-5V8H6v4H1V7z" fill="#111" /><path d="M3 8v2M12 8v2M4 3v2M11 3v2" stroke="#bbb" /></svg></button>
          </div>
        </div>
        <ul class="tree">
          <li class="root"><svg width="15" height="15" viewBox="0 0 15 15"><path d="M1 5l4-4h9v9l-4 4H1z" fill="#fbe27a" stroke="#a3411c" stroke-width="1.300" /><path d="M1 5h9v9H1z" fill="#f4cb2a" stroke="#8e6a0e" /></svg>Part8</li>
          <li><svg class="exp" width="5" height="8"><path d="M.5 1l3.500 3-3.500 3z" fill="#fff" stroke="#555" /></svg><svg width="15" height="14"><path d="M3 3v9h4M3 6h4" fill="none" stroke="#333" stroke-width="1.300" /><path d="M1 1h4v3H1zM7 4h3v3H7zM7 10h3v3H7zM11 7h4v2h-4z" fill="#31557f" /></svg>View: Master</li>
          <li><svg class="exp" width="5" height="8"><path d="M.5 1l3.500 3-3.500 3z" fill="#fff" stroke="#555" /></svg><svg width="15" height="14"><path d="M.5 12.500V2.500l2-2h4l1 2h7v10z" fill="#f0cd96" stroke="#a88047" /><path d="M1 4h13" stroke="#fbe8c6" /></svg>Origin</li>
          <li><i class="exp"></i><svg width="15" height="14"><path d="M0 1h14v12H0z" fill="#333" /><path d="M2 2h10v9H2z" fill="#f4dc28" /></svg></li>
        </ul>
      </aside>

      <div class="stage">
        <div class="canvas">
          <svg class="scene" viewBox="298 143 982 511" aria-hidden="true">
            <defs>
              <clipPath id="bodyClip"><path d="M606 248L655 220L950 390L900 418Q862 434 815 424C770 416 735 392 687 392C650 394 632 424 622 443L606 473z" /></clipPath>
              <filter id="soft" x="-20%" y="-20%" width="140%" height="140%"><feGaussianBlur stdDeviation="4" /></filter>
              <filter id="shadow" x="-50%" y="-50%" width="200%" height="200%"><feGaussianBlur stdDeviation="6" /></filter>
              <linearGradient id="gFace" x1="0" y1="0" x2="0" y2="1"><stop offset="0" stop-color="#bac6cf" /><stop offset="1" stop-color="#adbac5" /></linearGradient>
              <radialGradient id="gBall" cx=".35" cy=".35" r=".7"><stop offset="0" stop-color="#fff" /><stop offset="1" stop-color="#78828e" /></radialGradient>
            </defs>
            <path d="M606 248L655 220L950 390L900 418Q862 434 815 424C770 416 735 392 687 392C650 394 632 424 622 443L606 473z" fill="#bfbfbc" />
            <g clip-path="url(#bodyClip)">
              <path d="M655 190L970 380V396Q890 408 840 390Q770 360 735 366Q700 384 655 425z" fill="url(#gFace)" filter="url(#soft)" />
              <path d="M606 248L655 276V472H600z" fill="#bdbdba" />
              <path d="M606 247L655 219V276z" fill="#c9cac9" />
            </g>
            <path d="M606 473L622 443C632 424 650 394 687 393L657 443L625 464z" fill="#9ca2a7" />
            <path d="M606 473L622 443Q636 412 650 403V443L625 462z" fill="#a3a4a4" />
            <path d="M606 473L657 443M655 220L606 248V473M606 248L900 418L950 390M606 473L622 443C632 424 650 394 687 392.500C735 392 770 416 815 424Q862 434 900 418" fill="none" stroke="#333" />
            <path d="M655 220L950 390M687 393L657 443" stroke="#559564" stroke-width="1.400" />
            <g stroke="#181858" fill="none"><path d="M654.500 196v24M949.500 366v24M655 200L793 279M812 291L950 369" /><path d="M649 218v104M649 338v104" stroke-width="2" stroke="#302f7b" /></g>
            <path d="M649 322v16" stroke="#6666a8" />
            <path d="M655 200l9 2-3 5zM950 369l-9-1 3-6zM646 226l3-9 3 9zM646 434l3 9 3-9z" fill="#22226c" />
            <path d="M648 215l6 4" stroke="#22226c" />
            <text x="634" y="334" class="dim">4.000</text>
            <text x="787" y="289" class="dim">6.000</text>
            <path d="M703 362L668 383" stroke="#ad7215" stroke-width="3.500" /><path d="M656 390l8-14 8 11q-7 5-16 3z" fill="#c8820f" /><path d="M656 390l8-14 4 9z" fill="#a66a12" />
            <circle cx="705" cy="361" r="5" fill="url(#gBall)" />
            <ellipse cx="1208" cy="280" rx="46" ry="20" fill="#c6c6c6" filter="url(#shadow)" />
            <g stroke="#777" stroke-linejoin="round"><path d="M1160 220l48-22 48 22-48 27z" fill="#f3f3f3" /><path d="M1160 220l48 27v55l-43-29z" fill="#efefef" /><path d="M1256 220l-48 27v55l43-29z" fill="#ebebeb" /></g>
            <g class="cube"><text transform="matrix(.91 .37 -.78 .53 1207 223)">TOP</text><text transform="matrix(.9 .48 .05 1 1185 265)">FRONT</text><text transform="matrix(.9 -.48 -.05 1 1232 266)">RIGHT</text></g>
            <g fill="none" stroke="#555"><rect x="1240.500" y="153.500" width="11" height="3" rx="1" /><path d="M1262 150.500v-2h7.500v8h-2" /><rect x="1259.500" y="150.500" width="8" height="8" /><rect x="1262.500" y="153.500" width="2" height="2" stroke-width="1.500" /><path d="M1278 150l6 7M1284 150l-6 7" stroke-width="2" /></g>
            <circle cx="420" cy="538" r="32" fill="none" stroke="#f5e92c" stroke-width="3" />
            <path d="M420 538v14l3-3 3 6 2-1-3-6h5z" fill="#fff" stroke="#222" />
          </svg>

          <div class="mini">
            <div class="m-row">
              <i class="grip"></i>
              <div class="pill"><button class="m38" aria-label="Distance type"><svg width="16" height="14"><path d="M1 0v14M15 0v14M3 7h10" stroke="#111" stroke-width="1.500" /><path d="M2 7l4-3v6zM14 7l-4-3v6z" fill="#111" /></svg><i class="tri dark lg"></i></button><span class="field"><input v-model="distance" aria-label="Distance value" /><i class="sel">1 in</i></span><button class="m14" aria-label="Value options"><svg width="6" height="8"><path d="M0 0l6 4-6 4z" fill="#222" /></svg></button></div>
            </div>
            <div class="m-row ind"><div class="pill"><button class="m58"><svg width="16" height="16"><path d="M2 2h11v11H2z" fill="none" stroke="#333" stroke-dasharray="3 2" /><path d="M1 1h3v3H1zM11 1h3v3h-3zM1 11h3v3H1z" fill="#213a21" /><path d="M9 5v9l2-2 2 4 1-1-1-3h3z" fill="#fff" stroke="#222" /></svg>Profile</button><button class="m16" aria-label="Profile options"><i class="tri dark lg"></i></button></div></div>
            <div class="m-row ind"><div class="pill"><button class="m38" aria-label="Output"><svg width="16" height="16"><path d="M1 5l3-4h11v10l-3 4H2l-1-1z" fill="#fff" stroke="#222" stroke-width="1.200" /><path d="M1 5h11v10M12 5l3-4" fill="none" stroke="#777" /></svg><i class="tri dark lg"></i></button><button class="m38" aria-label="Operation"><Ico n="newsolid" /><i class="tri dark lg"></i></button><button class="m38" aria-label="Direction"><Ico n="dir1" /><i class="tri dark lg"></i></button></div></div>
            <div class="m-row ind"><div class="pill"><button class="m28" aria-label="OK"><svg width="12" height="12"><path d="M1 6l4 4 6-9" fill="none" stroke="#17702a" stroke-width="2" /></svg></button><button class="m28" aria-label="Cancel"><svg width="10" height="10"><path d="M1 1l8 8M9 1L1 9" stroke="#c01f25" stroke-width="2" /></svg></button></div><div class="pill"><button class="m38" aria-label="Options"><svg width="15" height="14"><path d="M.5 .5h14v13H.5z" fill="#fff" stroke="#222" /><path d="M1 2h13" stroke="#333" stroke-width="2" /><path d="M3 6h2M3 10h2" stroke="#1c69c5" stroke-width="2" /><path d="M6 6h6M6 10h6" stroke="#789" /></svg><i class="tri dark lg"></i></button></div></div>
          </div>

          <div class="navbar">
            <i class="dot"></i>
            <button aria-label="Wheel"><svg width="24" height="24"><rect x=".5" y=".5" width="30" height="22" rx="10" fill="#fff" stroke="#888" /><circle cx="12" cy="11.500" r="8" fill="#e4e4e4" stroke="#777" /><circle cx="12" cy="11.500" r="4" fill="#fff" stroke="#777" /></svg></button>
            <i class="tri mid"></i><hr>
            <button aria-label="Pan"><svg width="18" height="18"><path d="M4 10L1 7l2-1 3 3V2q1-1 2 0v5V1q1-1 2 0v6l1-5q1-1 2 0l-1 6 2-3q2 0 1 2l-3 6q-1 3-4 3t-5-4z" fill="#fff" stroke="#666" /></svg></button>
            <button aria-label="Zoom"><svg width="18" height="16"><circle cx="6" cy="7" r="5" fill="#fff" stroke="#666" stroke-width="1.200" /><path d="M10 11l3 4M12 3h5M14.500 1v5" stroke="#666" stroke-width="1.500" /></svg></button>
            <i class="tri mid"></i>
            <button aria-label="Orbit"><svg width="18" height="18"><ellipse cx="8" cy="9" rx="3.500" ry="7.500" fill="none" stroke="#666" /><path d="M3 6q-5 3 2 6h12M1 11l3 2" fill="none" stroke="#666" /><path d="M8 5v6M5 8h6M14 4v5M12 7h5" stroke="#777" /></svg></button>
            <i class="tri mid"></i>
            <button aria-label="Look at"><svg width="18" height="16"><path d="M1 6h16v9H1zM4 9h9v3H4zM2 5l8-4v3" fill="none" stroke="#666" stroke-width="1.200" /></svg></button>
            <i class="dot low"></i>
          </div>

          <button class="share" aria-label="Share"><svg width="28" height="32" viewBox="0 0 28 32"><path d="M14 1l13 7v16l-13 7-13-7V8z" fill="#4aa6e8" /><path d="M14 1l13 7-13 8L1 8z" fill="#67baf2" /><path d="M14 31V16l13-8v16z" fill="#3489d0" /><path d="M19 11l-9 5 9 5" fill="none" stroke="#fff" stroke-width="1.500" /><circle cx="19" cy="11" r="2" fill="#fff" /><circle cx="9" cy="16" r="2.500" fill="#fff" /><circle cx="19" cy="21" r="2" fill="#fff" /></svg></button>
        </div>

        <div class="docbar">
          <div class="doc-icons">
            <button aria-label="Cascade"><svg width="16" height="16"><path d="M1 6V1h9v2M4 9V4h9v3M7 8h8v6H7z" fill="none" stroke="#ddd" stroke-width="1.400" /></svg></button>
            <button aria-label="Arrange"><svg width="16" height="16"><path d="M1.500 1.500h5v5h-5zM9.500 1.500h5v5h-5zM1.500 9.500h5v5h-5zM9.500 9.500h5v5h-5z" fill="none" stroke="#ddd" stroke-width="1.400" /></svg></button>
            <button aria-label="Tile horizontally"><svg width="16" height="16"><path d="M1 1.500h14v5H1zM1 9.500h14v5H1z" fill="none" stroke="#ddd" stroke-width="1.400" /></svg></button>
            <button aria-label="Tile vertically"><svg width="16" height="16"><path d="M1.500 1h5v14h-5zM9.500 1h5v14h-5z" fill="none" stroke="#ddd" stroke-width="1.400" /></svg></button>
            <button aria-label="Expand"><svg width="16" height="16"><path d="M3 12l5-8 5 8z" fill="#eee" /></svg></button>
          </div>
          <button class="doc">My Home</button>
          <button class="doc cur">Part8<svg width="8" height="8"><path d="M1 1l6 6M7 1L1 7" stroke="#333" stroke-width="2" /></svg></button>
        </div>
      </div>

      <section class="dialog" role="dialog" aria-label="Extrude">
        <header><span>Extrude</span><button aria-label="Close"><svg width="12" height="10"><path d="M2 1l8 8M10 1L2 9" stroke="#667483" stroke-width="4" /><path d="M2 1l8 8M10 1L2 9" stroke="#fff" stroke-width="1.800" /></svg></button></header>
        <div class="d-body">
          <div class="d-tabs"><button class="cur">Shape</button><button>More</button></div>
          <div class="page">
            <div class="col-a">
              <div class="pickrow"><button id="bProfile" class="tool lit dotted"><Ico n="pick" :s="20" /></button><label for="bProfile">Profile</label></div>
              <div class="pickrow"><button id="bSolids" class="tool off"><Ico n="picksolid" :s="20" /></button><label for="bSolids">Solids</label></div>
              <fieldset class="out"><legend>Output</legend><button class="tool lit" aria-label="Solid"><Ico n="solid" :s="20" /></button><button class="tool" aria-label="Surface"><Ico n="surf" :s="20" /></button></fieldset>
            </div>
            <div class="col-b">
              <button v-for="o in operations" :key="o" class="tool off" :aria-label="o"><Ico :n="o" :s="20" /></button>
              <button class="tool lit last" aria-label="New solid"><Ico n="newsolid" :s="20" /></button>
            </div>
            <div class="col-c">
              <fieldset class="ext">
                <legend>Extents</legend>
                <span class="selwrap"><select v-model="extents" aria-label="Extents"><option>Distance</option></select><i class="tri dark lg"></i></span>
                <span class="num"><input v-model="distance" aria-label="Distance" /><button aria-label="Distance options"><svg width="4" height="7"><path d="M0 0l4 3.500L0 7z" fill="#222" /></svg></button></span>
                <div class="dirs"><button v-for="(d, i) in directions" :key="d" class="tool" :class="{ lit: i === 0 }" :aria-label="d"><Ico :n="d" :s="20" /></button></div>
              </fieldset>
              <label class="match"><input type="checkbox" disabled>Match shape</label>
            </div>
          </div>
          <footer>
            <button class="q" aria-label="Help"><svg width="14" height="14"><path d="M1 1h11v10l-2 2H1z" fill="#fff" stroke="#222" stroke-width="1.500" /><path d="M4.500 5q0-2 2-2t2 2q0 1-2 2v1M6.500 9v2" fill="none" stroke="#222" stroke-width="1.500" /></svg></button>
            <label class="preview"><input type="checkbox" checked disabled aria-label="Preview"><svg width="28" height="13"><path d="M2 5h9v5q-1 2-4 2t-5-2zM14 6h9v4q-1 2-4 2t-5-2zM11 7h3M2 5l3-4M23 6l3-5 1 1" fill="#ddd" stroke="#777" stroke-width="1.500" /></svg></label>
            <button class="cmd">OK</button><button class="cmd">Cancel</button>
          </footer>
          <button class="fold" aria-label="Collapse dialog"><svg width="12" height="9"><path d="M1 9l5-9 5 9z" fill="#111" /></svg></button>
        </div>
      </section>
    </main>

    <footer class="status"><span>Select a feature or dimension</span><div><span>1</span><span>1</span></div></footer>
    <div class="taskbar"><i class="start"></i><i></i><i class="yel"></i><i></i><i></i><i></i></div>
    <div class="letterbox"></div>
  </div>
</template>

<style>
body { background: #000; overflow: hidden; }
</style>

<style scoped>
* { box-sizing: border-box; }
button { font: inherit; color: inherit; background: none; border: 0; padding: 0; margin: 0; display: inline-flex; align-items: center; justify-content: center; }
svg { display: block; flex: none; }
h2 { margin: 0; font-weight: 400; font-size: 11px; }
.sprite { position: absolute; width: 0; height: 0; }
.app { min-height: 100vh; display: flex; flex-direction: column; overflow: hidden; background: #f5f5f5; color: #3a3a3a; font: 11px/14px "Open Sans", "Noto Sans", sans-serif; }
.letterbox { height: 17px; background: #000; flex: none; }
.tri { display: inline-block; width: 0; height: 0; flex: none; border: 3px solid transparent; border-top-color: #ddd; border-bottom: 0; }
.tri.dark { border-top-color: #333; }
.tri.lg { border-width: 5px 4px 0; vertical-align: 1px; }
.tri.mid { border-top-color: #777; }
.vsep { width: 1px; height: 18px; margin: 0 3px 0 2px; background: #777; }

.titlebar { height: 17px; overflow: hidden; background: #505050; color: #ddd; flex: none; }
.title-row { display: flex; align-items: center; height: 26px; margin-top: -10px; }
.quick { display: flex; align-items: center; flex: none; width: 610px; }
.logo { width: 26px; padding: 8px 0 0 3px; font-size: 6px; line-height: 7px; font-weight: 700; color: #d79443; display: flex; flex-direction: column; align-items: flex-start; }
.cell { width: 23px; height: 22px; flex: none; }
.cell.wide { width: 28px; }
.quick > .tri { margin: 0 3px 0 1px; }
.combo { position: relative; display: flex; align-items: center; width: 94px; height: 20px; background: #a3a3a3; }
.combo select { appearance: none; width: 100%; border: 0; padding: 0 6px; background: transparent; color: #555; font: 11px/18px "Open Sans", sans-serif; }
.combo.ball { background: radial-gradient(circle at 10px 10px, #eee 0, #777 6px, #a3a3a3 7px); }
.combo.ball select { padding-left: 20px; }
.combo .tri { position: absolute; right: 3px; border-width: 4px 4px 0; }
.fx { font: italic 16px/18px "Liberation Serif", serif; }
.fx small { font-size: 10px; padding-top: 8px; }
.doc-title { flex: 1; padding-left: 79px; }
.title-right { display: flex; align-items: center; flex: none; }
.rtri { border: 4px solid transparent; border-left-color: #ddd; border-right: 0; margin-right: 4px; }
.search { width: 170px; height: 18px; border: 0; padding: 0 4px; background: #8f8f8f; font: 11px/18px "Open Sans", sans-serif; }
.search::placeholder { color: #ddd; }
.signin { width: 86px; justify-content: flex-start; padding-left: 1px; }
.xch { width: 28px; }
.title-right .wide + .tri { margin-left: -3px; }
.win-btns { display: flex; gap: 12px; margin-left: 20px; margin-right: -4px; }

.tabs { display: grid; grid-template-columns: 36px 75px 46px 60px 43px 41px 59px 43px 87px 75px 58px 94px 60px; height: 19px; padding-bottom: 1px; background: #505050; color: #d8d8d8; flex: none; }
.tabs .file { background: #f07f1e; color: #fff; margin: 0 -2px -1px 0; }
.tabs .active { margin: 0 4px -1px 6px; background: #f7f7f7; color: #444; }
.pill-tab { justify-content: center; }

.ribbon { display: flex; height: 90px; flex: none; border-top: 1px solid #fff; background: #f5f5f5; }
.panel { display: flex; flex-direction: column; align-items: center; justify-content: space-between; border-right: 1px solid #e2e2e2; padding: 1px 0 2px; margin-bottom: 1px; flex: none; }
.tools { display: flex; align-items: flex-start; height: 70px; }
.big { flex-direction: column; justify-content: flex-start; position: relative; padding-top: 3px; height: 69px; white-space: nowrap; line-height: 14px; }
.big > span { margin-top: 4px; }
.big > .tri { margin-top: 3px; }
.big .side { position: absolute; right: -6px; bottom: 16px; }
.on { background: linear-gradient(#b4dcf8, #a3cef3 70%, #c2e0fa); border: 1px solid #4a90c4; padding-top: 2px; }
.p-sketch { width: 72px; padding-right: 4px; } .p-prim { width: 60px; padding-right: 2px; } .p-create { width: 285px; } .p-modify { width: 315px; }
.p-explore { width: 60px; } .p-work { width: 89px; } .p-pattern { width: 51px; } .p-free { width: 91px; }
.p-surface { width: 75px; } .p-sim { width: 65px; } .p-conv { width: 69px; }
.p-last { flex: 1; border: 0; align-items: flex-start; padding: 2px 3px; }
.p-create .tools, .p-modify .tools { align-self: stretch; padding-left: 2px; }
.p-create .big { width: 43px; }
.p-work .tools { padding-left: 8px; }
.big.narrow { width: 37px; }
.smalls { display: grid; grid-auto-rows: 23px; }
.c-create { grid-template-columns: 63px 68px 60px; padding-left: 4px; }
.c-modify { grid-template-columns: 74px 103px 60px; padding-left: 2px; }
.small { justify-content: flex-start; gap: 5px; white-space: nowrap; }
.sqs { display: grid; grid-auto-rows: 23px; padding-top: 1px; }
.sq { width: 22px; height: 21px; border: 1px solid #d6d9dc; background: #fbfbfb; }
.smalls > .sq { margin-top: 1px; }
.two { grid-template-columns: 22px 13px; margin-left: 10px; }
.drop { width: 13px; border-left: 0; }
.pair { grid-template-columns: 24px 22px; }
.one { margin-left: 5px; }
.p-free .big { padding: 3px 6px 0 4px; }
.three { grid-template-columns: 24px 24px 22px; }
.more { width: 34px; gap: 6px; }

.work { position: relative; flex: 1; display: grid; grid-template-columns: 298px minmax(0, 1fr); min-height: 0; }
.browser { background: #fff; border: 1px solid #999; border-width: 1px 1px 2px 0; border-right-color: #e1e1e1; border-bottom-color: #bbb; margin-bottom: 1px; }
.b-head { height: 58px; background: #f4f4f4; border-bottom: 1px solid #ddd; display: flex; flex-direction: column; }
.b-close { align-self: flex-end; width: 16px; height: 12px; }
.b-title { display: flex; justify-content: space-between; align-items: center; padding: 0 3px 0 8px; height: 22px; color: #444; font-size: 12px; }
.b-tools { display: flex; gap: 8px; padding: 4px 3px; }
.tree { list-style: none; margin: 0; padding: 0; color: #222; }
.tree li { display: flex; align-items: center; gap: 3px; height: 17px; }
.tree .root { padding-left: 11px; gap: 2px; }
.tree .exp { width: 5px; margin: 0 4px 0 7px; }

.stage { display: flex; flex-direction: column; min-width: 0; }
.canvas { position: relative; flex: 1; overflow: hidden; background: #fff; }
.scene { position: absolute; inset: 0; width: 100%; height: 100%; }
.dim { font: 12px "Open Sans", sans-serif; fill: #25256e; stroke: #25256e; stroke-width: .2px; }
.cube text { font: 700 12px "Open Sans", sans-serif; fill: #a3a3a3; text-anchor: middle; }

.mini { position: absolute; left: 266px; top: 301px; display: flex; flex-direction: column; gap: 8px; color: #222; }
.m-row { display: flex; gap: 8px; height: 20px; }
.m-row:first-child { gap: 2px; }
.ind { padding-left: 12px; }
.grip { width: 10px; border: 1px solid #aaa; border-radius: 4px; background: #e0e0e0; }
.pill { display: flex; border: 1px solid #9c9c9c; border-radius: 10px; overflow: hidden; background: linear-gradient(#f8f8f8, #cfcfcf); }
.pill button { gap: 3px; border-right: 1px solid #aaa; padding-right: 2px; }
.pill button:last-child { border-right: 0; }
.m38 { width: 37px; } .m58 { width: 58px; } .m16 { width: 16px; } .m28 { width: 27px; } .m14 { width: 14px; }
.field { position: relative; width: 94px; padding: 0 2px 0 9px; border-right: 1px solid #aaa; }
.field input { width: 100%; height: 18px; border: 1px solid #4e94d4; background: #fff; color: transparent; padding: 0; font-size: 11px; }
.sel { position: absolute; left: 12px; top: 3px; padding: 0 1px; background: #3087dd; color: #fff; font: 11px/12px "Open Sans", sans-serif; border-right: 1px solid #222; }

.navbar { position: absolute; right: -10px; top: 184px; width: 33px; height: 188px; border: 2px solid #bbb; border-radius: 7px; background: #f5f5f5; display: flex; flex-direction: column; align-items: center; padding-top: 3px; gap: 6px; }
.navbar button { align-self: flex-start; margin-left: 6px; }
.navbar button:first-of-type { margin-left: 4px; margin-top: 2px; }
.navbar hr { width: 100%; margin: -1px 0; border: 0; border-top: 1px solid #bbb; flex: none; }
.dot { width: 6px; height: 6px; border-radius: 3px; background: #aaa; flex: none; align-self: flex-end; margin-right: 5px; }
.share { position: absolute; right: -2px; top: 437px; width: 37px; height: 46px; border: 1px solid #aaa; background: #fff; justify-content: flex-start; padding-left: 8px; }

.docbar { display: flex; height: 22px; background: #5a5a5a; color: #ddd; flex: none; }
.doc-icons { display: flex; align-items: center; gap: 7px; width: 115px; padding-left: 3px; border-right: 1px solid #999; }
.doc { width: 67px; }
.cur.doc { width: 60px; gap: 7px; background: #f5f5f5; color: #333; }

.dialog { position: absolute; left: -1px; top: 115px; width: 316px; height: 275px; border: 1px solid #45566a; border-radius: 6px; background: linear-gradient(100deg, #b9d2e8, #d5e3ef 60%, #c4daee); padding: 0 8px 8px 5px; color: #222; box-shadow: inset 0 0 0 1px #e9f3fc; }
.dialog > header { display: flex; align-items: center; justify-content: space-between; height: 28px; padding: 3px 1px 0 3px; color: #49545f; }
.dialog > header button { width: 29px; height: 15px; border: 1px solid #8ea2b5; border-radius: 2px; }
.d-body { background: #f0f0f0; height: 237px; }
.d-tabs { display: flex; align-items: flex-end; height: 20px; }
.d-tabs button { width: 37px; height: 17px; border: 1px solid #8a8d92; border-bottom: 0; border-left: 0; background: linear-gradient(#f2f2f2, #d5d5d5); }
.d-tabs .cur { width: 42px; height: 20px; border-left: 1px solid #8a8d92; background: #fff; position: relative; top: 1px; padding-bottom: 2px; }
.page { display: grid; grid-template-columns: 107px 49px 1fr; height: 165px; border: 1px solid #8a8d92; background: #fff; padding: 12px 8px 0 7px; }
.tool { width: 26px; height: 26px; border: 1px solid #848484; border-radius: 3px; background: linear-gradient(#f6f6f6, #cfcfcf); }
.lit { background: linear-gradient(#d5eaf7, #84bce0); border-color: #3c7fb1; }
.off { background: #f4f4f4; border-color: #c4c4c4; }
.dotted { outline: 1px dotted #1d5d91; outline-offset: -3px; }
.pickrow { display: flex; align-items: center; gap: 10px; height: 26px; margin: 3px 0 9px 0; }
fieldset { min-width: 0; margin: 0; border: 1px solid #dcdcdc; border-radius: 3px; padding: 0; }
legend { padding: 0 2px; line-height: 14px; }
.out legend { margin-left: -5px; }
.out { display: flex; gap: 4px; width: 77px; height: 54px; padding: 8px 0 0 9px; }
.col-b { width: 41px; height: 131px; border: 1px solid #dcdcdc; border-radius: 3px; padding: 9px 0 0 7px; display: flex; flex-direction: column; gap: 2px; }
.col-b .last { margin-top: 6px; }
.ext { height: 108px; margin-top: -6px; padding: 6px 0 0 5px; display: flex; flex-direction: column; }
.ext legend { margin-left: -1px; }
.selwrap, .num { position: relative; display: flex; width: 102px; height: 20px; margin-bottom: 7px; }
.num { margin-bottom: 8px; }
.selwrap select { appearance: none; width: 100%; border: 1px solid #707070; border-radius: 2px; background: linear-gradient(#f2f2f2, #d6d6d6); padding: 0 2px; font: inherit; color: #111; }
.selwrap .tri { position: absolute; right: 4px; top: 8px; }
.num input { width: 100%; border: 1px solid #ddd; padding: 0 5px; font: inherit; color: #111; }
.num button { position: absolute; right: 1px; top: 1px; width: 14px; height: 18px; background: #f0f0f0; }
.dirs { display: flex; gap: 2px; padding-left: 1px; }
.match { display: flex; align-items: center; gap: 3px; margin-top: 14px; height: 14px; color: #777; }
input[type="checkbox"] { appearance: none; display: grid; place-items: center; width: 13px; height: 13px; margin: 0; border: 1px solid #b5b5b5; background: #f8f8f8; flex: none; }
.preview input:checked::after { content: "✓"; color: #888; font: 10px/11px "DejaVu Sans", sans-serif; }
.d-body footer { display: flex; align-items: center; height: 40px; padding: 3px 3px 0 7px; }
.q { width: 21px; height: 20px; border: 1px solid #777; border-radius: 3px; background: #e9e9e9; }
.preview { display: flex; align-items: center; gap: 4px; width: 58px; height: 22px; margin: 0 27px 0 40px; padding-left: 4px; border: 1px solid #ddd; border-radius: 3px; }
.cmd { width: 69px; height: 20px; border: 1px solid #707070; border-radius: 3px; background: linear-gradient(#f3f3f3, #ebebeb 50%, #dadada 50%, #cfcfcf); color: #111; }
.cmd + .cmd { margin-left: 5px; }
.fold { width: 100%; height: 12px; border-top: 1px solid #888; background: linear-gradient(#eee, #cdcdcd); }

.status { display: flex; justify-content: space-between; align-items: center; height: 23px; background: #f4f4f4; color: #111; flex: none; }
.status div { display: flex; }
.status div span { width: 35px; text-align: center; border-left: 1px solid #ddd; }
.taskbar { display: flex; gap: 2px; height: 4px; background: #94a9c5; border-top: 1px solid #333; flex: none; }
.taskbar i { width: 57px; background: #d6e3ee; border-radius: 2px 2px 0 0; }
.taskbar .start { width: 51px; background: #5f7485; }
.taskbar .yel { background: #e6e3a0; }
</style>
